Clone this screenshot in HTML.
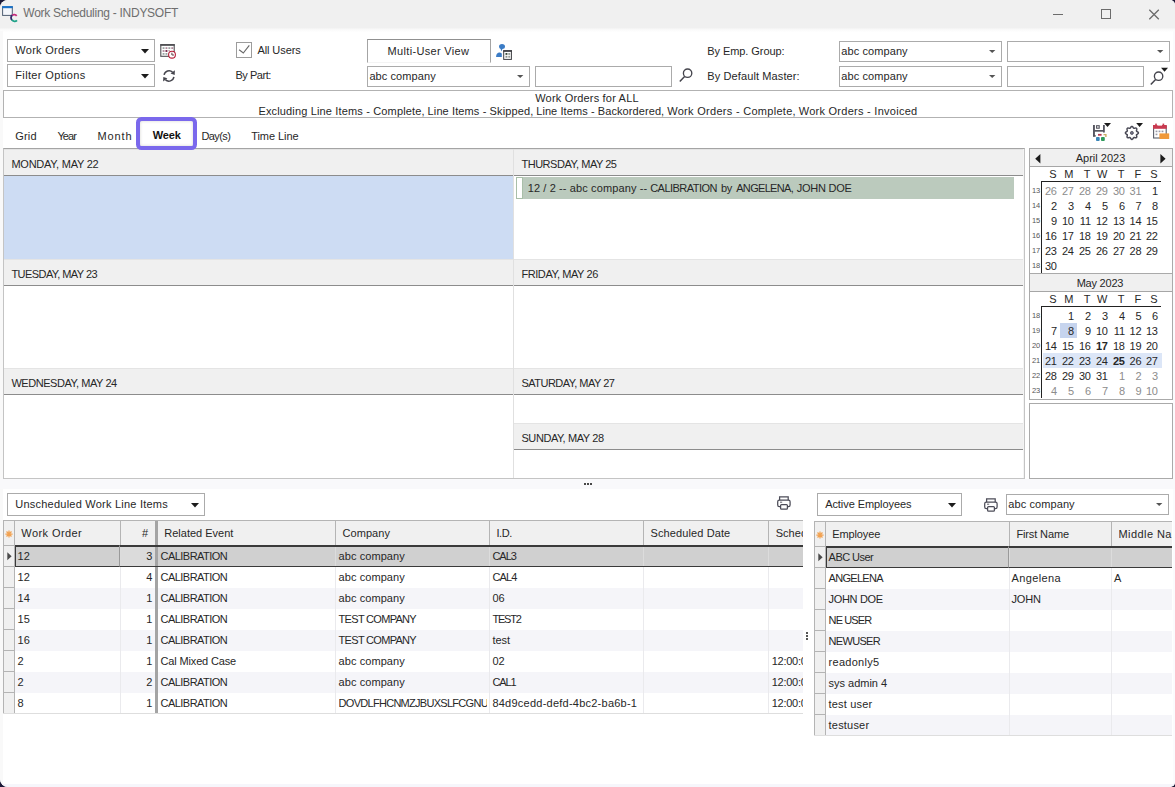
<!DOCTYPE html>
<html lang="en"><head><meta charset="utf-8"><title>Work Scheduling - INDYSOFT</title>
<style>
html,body{margin:0;padding:0;}
body{width:1175px;height:787px;overflow:hidden;background:#1d1a38;font-family:"Liberation Sans", sans-serif;font-size:11px;color:#272727;}
#win{position:absolute;left:0;top:0;width:1175px;height:787px;background:#fff;border-radius:8px 5px 5px 8px;overflow:hidden;}
.a{position:absolute;box-sizing:border-box;}
.t{position:absolute;white-space:nowrap;line-height:14px;height:14px;}
.c{overflow:hidden;}
svg{position:absolute;overflow:visible;}
</style></head><body><div id="win">
<div class="a" style="left:0px;top:0px;width:1175px;height:33px;background:linear-gradient(#f0f0f0 0,#f0f0f0 27.5px,#fbfbfb 30px,#ffffff 32.5px);"></div>
<svg style="left:0;top:0" width="20" height="24" viewBox="0 0 20 24">
<rect x="2.6" y="6.8" width="9.7" height="8.6" fill="#f3f6fb" stroke="#4f5f73" stroke-width="1"/>
<rect x="2.1" y="6.1" width="10.7" height="2.1" fill="#1a72c9"/>
<path d="M16.7 15.9 A3.2 3.2 0 0 0 12.2 15.4" fill="none" stroke="#c52c7c" stroke-width="1.8"/>
<path d="M12.2 15.2 A3.2 3.2 0 0 0 12 20" fill="none" stroke="#33296b" stroke-width="1.8"/>
<path d="M11.9 19.8 A3.2 3.2 0 0 0 17 20.3" fill="none" stroke="#1fa389" stroke-width="1.8"/>
</svg>
<svg style="left:1040px;top:0" width="135" height="30" viewBox="0 0 135 30" fill="none" stroke="#6c6c6c" stroke-width="1">
<path d="M13 14.5 H23"/><rect x="61.5" y="9.5" width="9" height="9"/><path d="M109.3 9.8 L118.8 19.2 M118.8 9.8 L109.3 19.2" stroke-width="1.3"/></svg>
<div class="a" style="left:0px;top:31px;width:3px;height:756px;background:#f9f9f9;"></div>
<div class="a" style="left:1173px;top:31px;width:2px;height:756px;background:#fbfbfd;"></div>
<div class="a" style="left:7px;top:39px;width:148px;height:23px;background:#fff;border:1px solid #ababab;"></div>
<svg style="left:140.5px;top:48.5px" width="8" height="5" viewBox="0 0 8 5"><path d="M0 0 H8 L4 4.6 Z" fill="#1c1c1c"/></svg>
<div class="a" style="left:7px;top:64px;width:148px;height:23px;background:#fff;border:1px solid #ababab;"></div>
<svg style="left:140.5px;top:73.5px" width="8" height="5" viewBox="0 0 8 5"><path d="M0 0 H8 L4 4.6 Z" fill="#1c1c1c"/></svg>
<svg style="left:159px;top:42px" width="19" height="19" viewBox="0 0 19 19">
<rect x="1.8" y="2.7" width="13.4" height="11.6" fill="#fff" stroke="#4e4e52" stroke-width="1.1"/>
<rect x="1.3" y="2.1" width="14.4" height="1.7" fill="#4e4e52"/>
<g fill="#9aa5a2"><rect x="3.6" y="5.2" width="1.9" height="1.8"/><rect x="9.4" y="5.2" width="1.9" height="1.8"/><rect x="3.6" y="11" width="1.9" height="1.8"/><rect x="6.5" y="11" width="1.9" height="1.8"/></g>
<g fill="#b18a9c"><rect x="6.5" y="5.2" width="1.9" height="1.8"/><rect x="12.3" y="5.2" width="1.9" height="1.8"/><rect x="3.6" y="8.1" width="1.9" height="1.8"/><rect x="9.4" y="8.1" width="1.4" height="1.2"/></g>
<rect x="6.5" y="8.1" width="1.9" height="1.8" fill="#6a1a3c"/>
<circle cx="13" cy="12.7" r="3.4" fill="#fff" stroke="#b51d38" stroke-width="1.1"/>
<path d="M12.9 10.7 V13 H15" fill="none" stroke="#4a2a30" stroke-width="0.9"/>
</svg>
<svg style="left:155px;top:62px" width="26" height="26" viewBox="155 62 26 26">
<path d="M164.1 74.9 A5 5 0 0 1 172.6 72.2" fill="none" stroke="#45454d" stroke-width="1.5"/>
<path d="M173.9 76.9 A5 5 0 0 1 165.4 79.6" fill="none" stroke="#45454d" stroke-width="1.5"/>
<path d="M174.9 70.2 L174.7 74.9 L170.6 73.6 Z" fill="#45454d"/>
<path d="M163.1 81.6 L163.3 76.9 L167.4 78.2 Z" fill="#45454d"/>
</svg>
<div class="a" style="left:236px;top:42px;width:16px;height:16px;background:#fff;border:1px solid #9c9c9c;"></div>
<svg style="left:236px;top:42px" width="16" height="16" viewBox="0 0 16 16"><path d="M3.1 7.7 L7.3 11 L13.3 3.4" fill="none" stroke="#6a6a6a" stroke-width="1.2"/></svg>
<div class="a" style="left:367px;top:39px;width:124px;height:24px;background:#fff;border:1px solid #a4a4a4;border-top-color:#909090;border-bottom:1px solid #f4f4f4;"></div>
<svg style="left:490px;top:38px" width="30" height="30" viewBox="490 38 30 30">
<ellipse cx="502" cy="46.4" rx="3" ry="2.5" fill="#3b7cc6"/>
<path d="M500.2 47.5 H503 L501.4 51.6 Z" fill="#3b7cc6"/>
<path d="M496.1 56.9 C496.1 53.6 498 52.6 499.6 52.6 C501 52.6 501.8 53.4 501.8 54.4 V56.9 Z" fill="#3b7cc6"/>
<rect x="503.7" y="50.8" width="7.7" height="8.6" fill="#fff" stroke="#3e3e42" stroke-width="1"/>
<rect x="503.2" y="50.2" width="8.8" height="1.6" fill="#3e3e42"/>
<rect x="505.5" y="53" width="1.9" height="1.9" fill="#3a4a3a"/><rect x="508.3" y="53" width="1.9" height="1.9" fill="#9aa09a"/>
<rect x="505.5" y="55.8" width="1.9" height="1.9" fill="#8a908a"/><rect x="508.3" y="55.8" width="1.9" height="1.9" fill="#9aa09a"/>
</svg>
<div class="a" style="left:367px;top:66px;width:163px;height:21px;background:#fff;border:1px solid #ababab;"></div>
<svg style="left:517.0px;top:75.0px" width="7" height="4" viewBox="0 0 7 4"><path d="M0 0 H6.4 L3.2 3 Z" fill="#555555"/></svg>
<div class="a" style="left:535px;top:66px;width:137px;height:21px;background:#fff;border:1px solid #ababab;"></div>
<svg style="left:679px;top:67.6px" width="18" height="16" viewBox="0 0 18 16"><circle cx="8.6" cy="5.2" r="4.2" fill="none" stroke="#44444c" stroke-width="1.35"/><path d="M5.6 8.4 L0.8 13.4" stroke="#44444c" stroke-width="1.5" fill="none"/></svg>
<div class="a" style="left:839px;top:41px;width:163px;height:21px;background:#fff;border:1px solid #ababab;"></div>
<svg style="left:989.0px;top:50.0px" width="7" height="4" viewBox="0 0 7 4"><path d="M0 0 H6.4 L3.2 3 Z" fill="#555555"/></svg>
<div class="a" style="left:1007px;top:41px;width:163px;height:21px;background:#fff;border:1px solid #ababab;"></div>
<svg style="left:1157.0px;top:50.0px" width="7" height="4" viewBox="0 0 7 4"><path d="M0 0 H6.4 L3.2 3 Z" fill="#555555"/></svg>
<div class="a" style="left:839px;top:66px;width:163px;height:21px;background:#fff;border:1px solid #ababab;"></div>
<svg style="left:989.0px;top:75.0px" width="7" height="4" viewBox="0 0 7 4"><path d="M0 0 H6.4 L3.2 3 Z" fill="#555555"/></svg>
<div class="a" style="left:1007px;top:66px;width:137px;height:21px;background:#fff;border:1px solid #ababab;"></div>
<svg style="left:1150px;top:71px" width="18" height="16" viewBox="0 0 18 16"><circle cx="8.6" cy="5.2" r="4.2" fill="none" stroke="#44444c" stroke-width="1.35"/><path d="M5.6 8.4 L0.8 13.4" stroke="#44444c" stroke-width="1.5" fill="none"/><path d="M11 -3.2 H18 L14.5 0.7 Z" fill="#1c1c1c"/></svg>
<div class="a" style="left:3px;top:90px;width:1170px;height:28px;background:#fff;border:1px solid #b2b2b2;"></div>
<svg style="left:1088px;top:118px" width="28" height="28" viewBox="1088 118 28 28">
<rect x="1093" y="125" width="1.9" height="11.6" fill="#55555f"/><rect x="1093" y="135.2" width="2.8" height="1.4" fill="#55555f"/>
<rect x="1103" y="125" width="1.8" height="7.5" fill="#55555f"/>
<rect x="1094" y="130" width="10" height="1.7" fill="#55555f"/>
<rect x="1096.6" y="125.7" width="2.6" height="2.5" fill="#fff" stroke="#55555f" stroke-width="1.1"/>
<rect x="1098" y="133.9" width="3.6" height="1.8" fill="#b8384f"/>
<path d="M1103.5 133.9 H1106.6 V136.9 H1105.2 V135.3 H1103.5 Z" fill="#c9ab62"/>
<rect x="1096" y="137.1" width="3.7" height="3.8" rx="0.9" fill="#3a86b8"/><rect x="1101" y="137.1" width="3.8" height="3.8" rx="0.9" fill="#2f9a5c"/>
<path d="M1104 123 H1111 L1107.5 127 Z" fill="#1c1c1c"/>
</svg>
<svg style="left:1120px;top:118px" width="28" height="28" viewBox="1120 118 28 28">
<path d="M1131.90 126.40 L1132.32 126.51 L1132.70 126.83 L1133.02 127.26 L1133.29 127.71 L1133.54 128.07 L1133.81 128.28 L1134.16 128.33 L1134.59 128.25 L1135.09 128.12 L1135.63 128.04 L1136.12 128.09 L1136.50 128.30 L1136.71 128.68 L1136.76 129.17 L1136.68 129.71 L1136.55 130.21 L1136.47 130.64 L1136.52 130.99 L1136.73 131.26 L1137.09 131.51 L1137.54 131.78 L1137.97 132.10 L1138.29 132.48 L1138.40 132.90 L1138.29 133.32 L1137.97 133.70 L1137.54 134.02 L1137.09 134.29 L1136.73 134.54 L1136.52 134.81 L1136.47 135.16 L1136.55 135.59 L1136.68 136.09 L1136.76 136.63 L1136.71 137.12 L1136.50 137.50 L1136.12 137.71 L1135.63 137.76 L1135.09 137.68 L1134.59 137.55 L1134.16 137.47 L1133.81 137.52 L1133.54 137.73 L1133.29 138.09 L1133.02 138.54 L1132.70 138.97 L1132.32 139.29 L1131.90 139.40 L1131.48 139.29 L1131.10 138.97 L1130.78 138.54 L1130.51 138.09 L1130.26 137.73 L1129.99 137.52 L1129.64 137.47 L1129.21 137.55 L1128.71 137.68 L1128.17 137.76 L1127.68 137.71 L1127.30 137.50 L1127.09 137.12 L1127.04 136.63 L1127.12 136.09 L1127.25 135.59 L1127.33 135.16 L1127.28 134.81 L1127.07 134.54 L1126.71 134.29 L1126.26 134.02 L1125.83 133.70 L1125.51 133.32 L1125.40 132.90 L1125.51 132.48 L1125.83 132.10 L1126.26 131.78 L1126.71 131.51 L1127.07 131.26 L1127.28 130.99 L1127.33 130.64 L1127.25 130.21 L1127.12 129.71 L1127.04 129.17 L1127.09 128.68 L1127.30 128.30 L1127.68 128.09 L1128.17 128.04 L1128.71 128.12 L1129.21 128.25 L1129.64 128.33 L1129.99 128.28 L1130.26 128.07 L1130.51 127.71 L1130.78 127.26 L1131.10 126.83 L1131.48 126.51 Z" fill="none" stroke="#4a4a56" stroke-width="1.5" stroke-linejoin="round"/>
<circle cx="1131.9" cy="132.9" r="1.5" fill="#74748a" stroke="#4a4a56" stroke-width="0.8"/>
<path d="M1136.2 123 H1143 L1139.6 127 Z" fill="#1c1c1c"/>
</svg>
<svg style="left:1152px;top:123px" width="18" height="18" viewBox="0 0 18 18">
<rect x="1.6" y="3.4" width="12.6" height="11.6" fill="#fff" stroke="#5a5f6a" stroke-width="1.1"/>
<rect x="1" y="2" width="13.8" height="3.8" fill="#c93a50"/>
<rect x="3.2" y="0.6" width="1.6" height="2.6" fill="#c93a50"/><rect x="10.6" y="0.6" width="1.6" height="2.6" fill="#c93a50"/>
<rect x="5.4" y="1.2" width="4.6" height="1.4" fill="#fff"/>
<g fill="#9a9aa6"><rect x="3.6" y="7.6" width="1.8" height="1.6"/><rect x="6.6" y="7.6" width="1.8" height="1.6"/><rect x="9.6" y="7.6" width="1.8" height="1.6"/><rect x="3.6" y="10.6" width="1.8" height="1.6"/></g>
<rect x="7.4" y="10.4" width="9.8" height="5.6" fill="#f0993a"/>
</svg>
<div class="a" style="left:3px;top:148px;width:1022px;height:331px;background:#fff;border:1px solid #c4c4c4;border-top-color:#a4a4a4;"></div>
<div class="a" style="left:4px;top:149px;width:509px;height:26px;background:#f0f0f0;border-top:1px solid #e4e4e4;"></div>
<div class="a" style="left:4px;top:175px;width:509px;height:1px;background:#8c8c8c;"></div>
<div class="a" style="left:4px;top:259px;width:509px;height:26px;background:#f0f0f0;border-top:1px solid #e4e4e4;"></div>
<div class="a" style="left:4px;top:285px;width:509px;height:1px;background:#8c8c8c;"></div>
<div class="a" style="left:4px;top:368px;width:509px;height:26px;background:#f0f0f0;border-top:1px solid #e4e4e4;"></div>
<div class="a" style="left:4px;top:394px;width:509px;height:1px;background:#8c8c8c;"></div>
<div class="a" style="left:514px;top:149px;width:509px;height:26px;background:#f0f0f0;border-top:1px solid #e4e4e4;"></div>
<div class="a" style="left:514px;top:175px;width:509px;height:1px;background:#8c8c8c;"></div>
<div class="a" style="left:514px;top:259px;width:509px;height:26px;background:#f0f0f0;border-top:1px solid #e4e4e4;"></div>
<div class="a" style="left:514px;top:285px;width:509px;height:1px;background:#8c8c8c;"></div>
<div class="a" style="left:514px;top:368px;width:509px;height:26px;background:#f0f0f0;border-top:1px solid #e4e4e4;"></div>
<div class="a" style="left:514px;top:394px;width:509px;height:1px;background:#8c8c8c;"></div>
<div class="a" style="left:514px;top:423px;width:509px;height:26px;background:#f0f0f0;border-top:1px solid #e4e4e4;"></div>
<div class="a" style="left:514px;top:449px;width:509px;height:1px;background:#8c8c8c;"></div>
<div class="a" style="left:4px;top:176px;width:509px;height:83px;background:#cddcf3;"></div>
<div class="a" style="left:513px;top:149px;width:1px;height:329px;background:#e0e0e0;"></div>
<div class="a" style="left:1023px;top:149px;width:1px;height:329px;background:#f4f4f4;"></div>
<div class="a" style="left:516px;top:177px;width:498px;height:22px;background:#bbcabd;"></div>
<div class="a" style="left:516px;top:177px;width:7px;height:22px;background:#fff;border:1px solid #a9bfa9;"></div>
<div class="a" style="left:1029px;top:148px;width:144px;height:252px;background:#fff;border:1px solid #aaaaaa;"></div>
<div class="a" style="left:1029px;top:403px;width:144px;height:76px;background:#fff;border:1px solid #aaaaaa;"></div>
<div class="a" style="left:1060px;top:323px;width:17px;height:15px;background:#c6d4ee;"></div>
<div class="a" style="left:1043px;top:353px;width:119px;height:15px;background:#dce6f7;"></div>
<div class="a" style="left:1030px;top:149px;width:142px;height:17px;background:#f0f0f0;"></div>
<div class="a" style="left:1030px;top:166px;width:142px;height:1px;background:#a6a6a6;"></div>
<svg style="left:1035px;top:153.6px" width="6" height="10" viewBox="0 0 6 10"><path d="M5.4 0 V9.4 L0.2 4.7 Z" fill="#1c1c1c"/></svg>
<svg style="left:1160px;top:153.6px" width="6" height="10" viewBox="0 0 6 10"><path d="M0.4 0 V9.4 L5.6 4.7 Z" fill="#1c1c1c"/></svg>
<div class="a" style="left:1041px;top:181px;width:120px;height:1px;background:#222;"></div>
<div class="a" style="left:1041px;top:181px;width:1px;height:92px;background:#222;"></div>
<div class="a" style="left:1030px;top:273px;width:142px;height:1px;background:#aaaaaa;"></div>
<div class="a" style="left:1030px;top:274px;width:142px;height:17px;background:#f0f0f0;"></div>
<div class="a" style="left:1030px;top:291px;width:142px;height:1px;background:#a6a6a6;"></div>
<div class="a" style="left:1041px;top:306px;width:120px;height:1px;background:#222;"></div>
<div class="a" style="left:1041px;top:306px;width:1px;height:92px;background:#222;"></div>
<div class="a" style="left:0px;top:479px;width:1175px;height:10px;background:#f9f9fb;"></div>
<div class="a" style="left:584px;top:483px;width:2px;height:2px;background:#484848;"></div>
<div class="a" style="left:587px;top:483px;width:2px;height:2px;background:#484848;"></div>
<div class="a" style="left:590px;top:483px;width:2px;height:2px;background:#484848;"></div>
<div class="a" style="left:806px;top:632px;width:2px;height:2px;background:#555;"></div>
<div class="a" style="left:806px;top:635px;width:2px;height:2px;background:#555;"></div>
<div class="a" style="left:806px;top:638px;width:2px;height:2px;background:#555;"></div>
<div class="a" style="left:7px;top:493px;width:198px;height:23px;background:#fff;border:1px solid #ababab;"></div>
<svg style="left:190.5px;top:502.5px" width="8" height="5" viewBox="0 0 8 5"><path d="M0 0 H8 L4 4.6 Z" fill="#1c1c1c"/></svg>
<div class="a" style="left:817px;top:493px;width:145px;height:23px;background:#fff;border:1px solid #ababab;"></div>
<svg style="left:947.5px;top:502.5px" width="8" height="5" viewBox="0 0 8 5"><path d="M0 0 H8 L4 4.6 Z" fill="#1c1c1c"/></svg>
<div class="a" style="left:1006px;top:494px;width:163px;height:21px;background:#fff;border:1px solid #ababab;"></div>
<svg style="left:1156.0px;top:503.0px" width="7" height="4" viewBox="0 0 7 4"><path d="M0 0 H6.4 L3.2 3 Z" fill="#555555"/></svg>
<svg style="left:777.1px;top:495.8px" width="15" height="15" viewBox="0 0 15 15" fill="none" stroke="#4c4c58" stroke-width="1.25">
<path d="M2.6 4.2 V0.8 H11.2 V4.2"/><rect x="0.7" y="4.1" width="12.4" height="6.4" rx="1.6"/><rect x="3.6" y="8.5" width="6.8" height="4.7" rx="0.9" fill="#fff"/><path d="M3 6.2 H5.2" stroke-width="0.9"/></svg>
<svg style="left:983.9px;top:498px" width="15" height="15" viewBox="0 0 15 15" fill="none" stroke="#4c4c58" stroke-width="1.25">
<path d="M2.6 4.2 V0.8 H11.2 V4.2"/><rect x="0.7" y="4.1" width="12.4" height="6.4" rx="1.6"/><rect x="3.6" y="8.5" width="6.8" height="4.7" rx="0.9" fill="#fff"/><path d="M3 6.2 H5.2" stroke-width="0.9"/></svg>
<div class="a" style="left:3px;top:520px;width:800px;height:26px;background:#f0f0f0;border-top:1px solid #b4b4b4;border-left:1px solid #b4b4b4;"></div>
<div class="a" style="left:15px;top:546px;width:788px;height:20px;background:#d0d0d0;"></div>
<div class="a" style="left:3px;top:545px;width:12px;height:22px;background:#f0f0f0;border:1px solid #b4b4b4;"></div>
<div class="a" style="left:15px;top:567px;width:788px;height:21px;background:#fff;"></div>
<div class="a" style="left:3px;top:566px;width:12px;height:22px;background:#f0f0f0;border:1px solid #b4b4b4;"></div>
<div class="a" style="left:15px;top:588px;width:788px;height:21px;background:#f5f5f9;"></div>
<div class="a" style="left:3px;top:587px;width:12px;height:22px;background:#f0f0f0;border:1px solid #b4b4b4;"></div>
<div class="a" style="left:15px;top:609px;width:788px;height:21px;background:#fff;"></div>
<div class="a" style="left:3px;top:608px;width:12px;height:22px;background:#f0f0f0;border:1px solid #b4b4b4;"></div>
<div class="a" style="left:15px;top:630px;width:788px;height:21px;background:#f5f5f9;"></div>
<div class="a" style="left:3px;top:629px;width:12px;height:22px;background:#f0f0f0;border:1px solid #b4b4b4;"></div>
<div class="a" style="left:15px;top:651px;width:788px;height:21px;background:#fff;"></div>
<div class="a" style="left:3px;top:650px;width:12px;height:22px;background:#f0f0f0;border:1px solid #b4b4b4;"></div>
<div class="a" style="left:15px;top:672px;width:788px;height:21px;background:#f5f5f9;"></div>
<div class="a" style="left:3px;top:671px;width:12px;height:22px;background:#f0f0f0;border:1px solid #b4b4b4;"></div>
<div class="a" style="left:15px;top:693px;width:788px;height:21px;background:#fff;"></div>
<div class="a" style="left:3px;top:692px;width:12px;height:22px;background:#f0f0f0;border:1px solid #b4b4b4;"></div>
<div class="a" style="left:120px;top:521px;width:1px;height:24px;background:#b4b4b4;"></div>
<div class="a" style="left:120px;top:567px;width:1px;height:147px;background:#eaeaed;"></div>
<div class="a" style="left:120px;top:546px;width:1px;height:20px;background:#dcdcdc;"></div>
<div class="a" style="left:155px;top:521px;width:1px;height:24px;background:#b4b4b4;"></div>
<div class="a" style="left:155px;top:567px;width:1px;height:147px;background:#eaeaed;"></div>
<div class="a" style="left:155px;top:546px;width:1px;height:20px;background:#dcdcdc;"></div>
<div class="a" style="left:335px;top:521px;width:1px;height:24px;background:#b4b4b4;"></div>
<div class="a" style="left:335px;top:567px;width:1px;height:147px;background:#eaeaed;"></div>
<div class="a" style="left:335px;top:546px;width:1px;height:20px;background:#dcdcdc;"></div>
<div class="a" style="left:489px;top:521px;width:1px;height:24px;background:#b4b4b4;"></div>
<div class="a" style="left:489px;top:567px;width:1px;height:147px;background:#eaeaed;"></div>
<div class="a" style="left:489px;top:546px;width:1px;height:20px;background:#dcdcdc;"></div>
<div class="a" style="left:643px;top:521px;width:1px;height:24px;background:#b4b4b4;"></div>
<div class="a" style="left:643px;top:567px;width:1px;height:147px;background:#eaeaed;"></div>
<div class="a" style="left:643px;top:546px;width:1px;height:20px;background:#dcdcdc;"></div>
<div class="a" style="left:768px;top:521px;width:1px;height:24px;background:#b4b4b4;"></div>
<div class="a" style="left:768px;top:567px;width:1px;height:147px;background:#eaeaed;"></div>
<div class="a" style="left:768px;top:546px;width:1px;height:20px;background:#dcdcdc;"></div>
<div class="a" style="left:14px;top:521px;width:1px;height:24px;background:#b4b4b4;"></div>
<div class="a" style="left:155px;top:521px;width:3px;height:193px;background:#a4a4a4;"></div>
<div class="a" style="left:15px;top:545px;width:788px;height:1.5px;background:#3a3a3a;"></div>
<div class="a" style="left:15px;top:565.5px;width:788px;height:1.5px;background:#3a3a3a;"></div>
<div class="a" style="left:15px;top:545px;width:105px;height:22px;border:1.5px solid #3a3a3a;border-right:1px solid #9a9a9a;"></div>
<div class="a" style="left:3px;top:713px;width:800px;height:1px;background:#dedede;"></div>
<svg style="left:6.5px;top:551.5px" width="5" height="9" viewBox="0 0 5 9"><path d="M0.3 0.3 V8.3 L4.6 4.3 Z" fill="#4a4a4a"/></svg>
<svg style="left:4.800000000000001px;top:529.6px" width="8" height="8" viewBox="-4 -4 8 8" stroke="#f2a251" stroke-width="1.25"><path d="M0 -3.6 V3.6 M-3.6 0 H3.6 M-2.5 -2.5 L2.5 2.5 M-2.5 2.5 L2.5 -2.5"/></svg>
<div class="a" style="left:121px;top:546.5px;width:34px;height:19px;background:#dbdbdb;"></div>
<div class="a" style="left:814px;top:521px;width:358px;height:26px;background:#f0f0f0;border-top:1px solid #b4b4b4;border-left:1px solid #b4b4b4;"></div>
<div class="a" style="left:826px;top:547px;width:346px;height:20px;background:#d0d0d0;"></div>
<div class="a" style="left:814px;top:546px;width:12px;height:22px;background:#f0f0f0;border:1px solid #b4b4b4;"></div>
<div class="a" style="left:826px;top:568px;width:346px;height:21px;background:#fff;"></div>
<div class="a" style="left:814px;top:567px;width:12px;height:22px;background:#f0f0f0;border:1px solid #b4b4b4;"></div>
<div class="a" style="left:826px;top:589px;width:346px;height:21px;background:#f5f5f9;"></div>
<div class="a" style="left:814px;top:588px;width:12px;height:22px;background:#f0f0f0;border:1px solid #b4b4b4;"></div>
<div class="a" style="left:826px;top:610px;width:346px;height:21px;background:#fff;"></div>
<div class="a" style="left:814px;top:609px;width:12px;height:22px;background:#f0f0f0;border:1px solid #b4b4b4;"></div>
<div class="a" style="left:826px;top:631px;width:346px;height:21px;background:#f5f5f9;"></div>
<div class="a" style="left:814px;top:630px;width:12px;height:22px;background:#f0f0f0;border:1px solid #b4b4b4;"></div>
<div class="a" style="left:826px;top:652px;width:346px;height:21px;background:#fff;"></div>
<div class="a" style="left:814px;top:651px;width:12px;height:22px;background:#f0f0f0;border:1px solid #b4b4b4;"></div>
<div class="a" style="left:826px;top:673px;width:346px;height:21px;background:#f5f5f9;"></div>
<div class="a" style="left:814px;top:672px;width:12px;height:22px;background:#f0f0f0;border:1px solid #b4b4b4;"></div>
<div class="a" style="left:826px;top:694px;width:346px;height:21px;background:#fff;"></div>
<div class="a" style="left:814px;top:693px;width:12px;height:22px;background:#f0f0f0;border:1px solid #b4b4b4;"></div>
<div class="a" style="left:826px;top:715px;width:346px;height:21px;background:#f5f5f9;"></div>
<div class="a" style="left:814px;top:714px;width:12px;height:22px;background:#f0f0f0;border:1px solid #b4b4b4;"></div>
<div class="a" style="left:1009px;top:522px;width:1px;height:24px;background:#b4b4b4;"></div>
<div class="a" style="left:1009px;top:568px;width:1px;height:168px;background:#eaeaed;"></div>
<div class="a" style="left:1009px;top:547px;width:1px;height:20px;background:#dcdcdc;"></div>
<div class="a" style="left:1111px;top:522px;width:1px;height:24px;background:#b4b4b4;"></div>
<div class="a" style="left:1111px;top:568px;width:1px;height:168px;background:#eaeaed;"></div>
<div class="a" style="left:1111px;top:547px;width:1px;height:20px;background:#dcdcdc;"></div>
<div class="a" style="left:825px;top:522px;width:1px;height:24px;background:#b4b4b4;"></div>
<div class="a" style="left:826px;top:546px;width:346px;height:1.5px;background:#3a3a3a;"></div>
<div class="a" style="left:826px;top:566.5px;width:346px;height:1.5px;background:#3a3a3a;"></div>
<div class="a" style="left:826px;top:546px;width:183px;height:22px;border:1.5px solid #3a3a3a;border-right:1px solid #9a9a9a;"></div>
<div class="a" style="left:814px;top:735px;width:358px;height:1px;background:#dedede;"></div>
<svg style="left:817.5px;top:552.5px" width="5" height="9" viewBox="0 0 5 9"><path d="M0.3 0.3 V8.3 L4.6 4.3 Z" fill="#4a4a4a"/></svg>
<svg style="left:815.8px;top:530.6px" width="8" height="8" viewBox="-4 -4 8 8" stroke="#f2a251" stroke-width="1.25"><path d="M0 -3.6 V3.6 M-3.6 0 H3.6 M-2.5 -2.5 L2.5 2.5 M-2.5 2.5 L2.5 -2.5"/></svg>
<div class="a" style="left:0px;top:784px;width:1175px;height:3px;background:#f6f6fb;"></div>
<span class="t" style="top:5.84px;font-size:12px;color:#6e6e6e;letter-spacing:-0.273px;left:23.30px;">Work Scheduling - INDYSOFT</span>
<span class="t" style="top:43.19px;letter-spacing:0.286px;left:15.30px;">Work Orders</span>
<span class="t" style="top:68.19px;letter-spacing:0.352px;left:15.30px;">Filter Options</span>
<span class="t" style="top:42.69px;letter-spacing:-0.077px;left:257.40px;">All Users</span>
<span class="t" style="top:68.49px;letter-spacing:-0.446px;left:235.40px;">By Part:</span>
<span class="t" style="top:43.89px;letter-spacing:0.328px;left:387.60px;">Multi-User View</span>
<span class="t" style="top:68.59px;letter-spacing:0.086px;left:369.40px;">abc company</span>
<span class="t" style="top:43.89px;letter-spacing:-0.074px;left:707.30px;">By Emp. Group:</span>
<span class="t" style="top:68.59px;letter-spacing:0.107px;left:707.30px;">By Default Master:</span>
<span class="t" style="top:43.89px;letter-spacing:0.086px;left:841.30px;">abc company</span>
<span class="t" style="top:68.59px;letter-spacing:0.086px;left:841.30px;">abc company</span>
<span class="t" style="top:90.99px;letter-spacing:0.180px;left:87.00px;width:1000px;text-align:center;">Work Orders for ALL</span>
<span class="t" style="top:103.99px;letter-spacing:0.154px;left:258.40px;">Excluding Line Items - Complete,</span>
<span class="t" style="top:103.99px;letter-spacing:0.113px;left:427.60px;">Line Items - Skipped,</span>
<span class="t" style="top:103.99px;letter-spacing:0.085px;left:536.20px;">Line Items - Backordered,</span>
<span class="t" style="top:103.99px;letter-spacing:0.293px;left:667.20px;">Work Orders - Complete,</span>
<span class="t" style="top:103.99px;letter-spacing:0.267px;left:798.70px;">Work Orders - Invoiced</span>
<span class="t" style="top:128.99px;letter-spacing:0.173px;left:15.30px;">Grid</span>
<span class="t" style="top:128.99px;letter-spacing:-0.878px;left:57.40px;">Year</span>
<span class="t" style="top:128.99px;letter-spacing:0.880px;left:97.50px;">Month</span>
<span class="t" style="top:128.39px;color:#111;font-weight:bold;letter-spacing:-0.149px;left:152.70px;">Week</span>
<span class="t" style="top:128.99px;letter-spacing:-0.618px;left:201.50px;">Day(s)</span>
<span class="t" style="top:128.99px;letter-spacing:-0.061px;left:251.20px;">Time Line</span>
<span class="t" style="top:156.99px;letter-spacing:-0.229px;left:11.40px;">MONDAY, MAY 22</span>
<span class="t" style="top:266.99px;letter-spacing:-0.554px;left:11.40px;">TUESDAY, MAY 23</span>
<span class="t" style="top:375.99px;letter-spacing:-0.443px;left:11.40px;">WEDNESDAY, MAY 24</span>
<span class="t" style="top:156.99px;letter-spacing:-0.460px;left:521.40px;">THURSDAY, MAY 25</span>
<span class="t" style="top:266.99px;letter-spacing:-0.418px;left:521.40px;">FRIDAY, MAY 26</span>
<span class="t" style="top:375.99px;letter-spacing:-0.499px;left:521.40px;">SATURDAY, MAY 27</span>
<span class="t" style="top:430.99px;letter-spacing:-0.396px;left:521.40px;">SUNDAY, MAY 28</span>
<span class="t" style="top:181.19px;letter-spacing:0.118px;left:527.70px;">12 / 2 -- abc company --</span>
<span class="t" style="top:181.19px;letter-spacing:-0.533px;left:650.20px;">CALIBRATION</span>
<span class="t" style="top:181.19px;letter-spacing:-0.325px;left:721.00px;">by</span>
<span class="t" style="top:181.19px;letter-spacing:-0.671px;left:736.20px;">ANGELENA,</span>
<span class="t" style="top:181.19px;letter-spacing:-0.263px;left:796.80px;">JOHN DOE</span>
<span class="t" style="top:150.99px;letter-spacing:0.017px;left:1075.70px;">April 2023</span>
<span class="t" style="top:166.69px;right:118.50px;">S</span>
<span class="t" style="top:166.69px;right:101.50px;">M</span>
<span class="t" style="top:166.69px;right:84.50px;">T</span>
<span class="t" style="top:166.69px;right:67.50px;">W</span>
<span class="t" style="top:166.69px;right:50.50px;">T</span>
<span class="t" style="top:166.69px;right:33.90px;">F</span>
<span class="t" style="top:166.69px;right:17.50px;">S</span>
<span class="t" style="top:183.90px;font-size:7.5px;color:#555;letter-spacing:-0.150px;right:134.95px;">13</span>
<span class="t" style="top:183.99px;color:#8c8c8c;letter-spacing:-0.250px;right:118.25px;">26</span>
<span class="t" style="top:183.99px;color:#8c8c8c;letter-spacing:-0.250px;right:101.25px;">27</span>
<span class="t" style="top:183.99px;color:#8c8c8c;letter-spacing:-0.250px;right:84.25px;">28</span>
<span class="t" style="top:183.99px;color:#8c8c8c;letter-spacing:-0.250px;right:67.25px;">29</span>
<span class="t" style="top:183.99px;color:#8c8c8c;letter-spacing:-0.250px;right:50.25px;">30</span>
<span class="t" style="top:183.99px;color:#8c8c8c;letter-spacing:-0.250px;right:33.65px;">31</span>
<span class="t" style="top:183.99px;letter-spacing:-0.250px;right:17.25px;">1</span>
<span class="t" style="top:198.90px;font-size:7.5px;color:#555;letter-spacing:-0.150px;right:134.95px;">14</span>
<span class="t" style="top:198.99px;letter-spacing:-0.250px;right:118.25px;">2</span>
<span class="t" style="top:198.99px;letter-spacing:-0.250px;right:101.25px;">3</span>
<span class="t" style="top:198.99px;letter-spacing:-0.250px;right:84.25px;">4</span>
<span class="t" style="top:198.99px;letter-spacing:-0.250px;right:67.25px;">5</span>
<span class="t" style="top:198.99px;letter-spacing:-0.250px;right:50.25px;">6</span>
<span class="t" style="top:198.99px;letter-spacing:-0.250px;right:33.65px;">7</span>
<span class="t" style="top:198.99px;letter-spacing:-0.250px;right:17.25px;">8</span>
<span class="t" style="top:213.90px;font-size:7.5px;color:#555;letter-spacing:-0.150px;right:134.95px;">15</span>
<span class="t" style="top:213.99px;letter-spacing:-0.250px;right:118.25px;">9</span>
<span class="t" style="top:213.99px;letter-spacing:-0.250px;right:101.25px;">10</span>
<span class="t" style="top:213.99px;letter-spacing:-0.250px;right:84.25px;">11</span>
<span class="t" style="top:213.99px;letter-spacing:-0.250px;right:67.25px;">12</span>
<span class="t" style="top:213.99px;letter-spacing:-0.250px;right:50.25px;">13</span>
<span class="t" style="top:213.99px;letter-spacing:-0.250px;right:33.65px;">14</span>
<span class="t" style="top:213.99px;letter-spacing:-0.250px;right:17.25px;">15</span>
<span class="t" style="top:228.90px;font-size:7.5px;color:#555;letter-spacing:-0.150px;right:134.95px;">16</span>
<span class="t" style="top:228.99px;letter-spacing:-0.250px;right:118.25px;">16</span>
<span class="t" style="top:228.99px;letter-spacing:-0.250px;right:101.25px;">17</span>
<span class="t" style="top:228.99px;letter-spacing:-0.250px;right:84.25px;">18</span>
<span class="t" style="top:228.99px;letter-spacing:-0.250px;right:67.25px;">19</span>
<span class="t" style="top:228.99px;letter-spacing:-0.250px;right:50.25px;">20</span>
<span class="t" style="top:228.99px;letter-spacing:-0.250px;right:33.65px;">21</span>
<span class="t" style="top:228.99px;letter-spacing:-0.250px;right:17.25px;">22</span>
<span class="t" style="top:243.90px;font-size:7.5px;color:#555;letter-spacing:-0.150px;right:134.95px;">17</span>
<span class="t" style="top:243.99px;letter-spacing:-0.250px;right:118.25px;">23</span>
<span class="t" style="top:243.99px;letter-spacing:-0.250px;right:101.25px;">24</span>
<span class="t" style="top:243.99px;letter-spacing:-0.250px;right:84.25px;">25</span>
<span class="t" style="top:243.99px;letter-spacing:-0.250px;right:67.25px;">26</span>
<span class="t" style="top:243.99px;letter-spacing:-0.250px;right:50.25px;">27</span>
<span class="t" style="top:243.99px;letter-spacing:-0.250px;right:33.65px;">28</span>
<span class="t" style="top:243.99px;letter-spacing:-0.250px;right:17.25px;">29</span>
<span class="t" style="top:258.90px;font-size:7.5px;color:#555;letter-spacing:-0.150px;right:134.95px;">18</span>
<span class="t" style="top:258.99px;letter-spacing:-0.250px;right:118.25px;">30</span>
<span class="t" style="top:275.99px;letter-spacing:-0.230px;left:1076.70px;">May 2023</span>
<span class="t" style="top:291.69px;right:118.50px;">S</span>
<span class="t" style="top:291.69px;right:101.50px;">M</span>
<span class="t" style="top:291.69px;right:84.50px;">T</span>
<span class="t" style="top:291.69px;right:67.50px;">W</span>
<span class="t" style="top:291.69px;right:50.50px;">T</span>
<span class="t" style="top:291.69px;right:33.90px;">F</span>
<span class="t" style="top:291.69px;right:17.50px;">S</span>
<span class="t" style="top:308.90px;font-size:7.5px;color:#555;letter-spacing:-0.150px;right:134.95px;">18</span>
<span class="t" style="top:308.99px;letter-spacing:-0.250px;right:101.25px;">1</span>
<span class="t" style="top:308.99px;letter-spacing:-0.250px;right:84.25px;">2</span>
<span class="t" style="top:308.99px;letter-spacing:-0.250px;right:67.25px;">3</span>
<span class="t" style="top:308.99px;letter-spacing:-0.250px;right:50.25px;">4</span>
<span class="t" style="top:308.99px;letter-spacing:-0.250px;right:33.65px;">5</span>
<span class="t" style="top:308.99px;letter-spacing:-0.250px;right:17.25px;">6</span>
<span class="t" style="top:323.90px;font-size:7.5px;color:#555;letter-spacing:-0.150px;right:134.95px;">19</span>
<span class="t" style="top:323.99px;letter-spacing:-0.250px;right:118.25px;">7</span>
<span class="t" style="top:323.99px;letter-spacing:-0.250px;right:101.25px;">8</span>
<span class="t" style="top:323.99px;letter-spacing:-0.250px;right:84.25px;">9</span>
<span class="t" style="top:323.99px;letter-spacing:-0.250px;right:67.25px;">10</span>
<span class="t" style="top:323.99px;letter-spacing:-0.250px;right:50.25px;">11</span>
<span class="t" style="top:323.99px;letter-spacing:-0.250px;right:33.65px;">12</span>
<span class="t" style="top:323.99px;letter-spacing:-0.250px;right:17.25px;">13</span>
<span class="t" style="top:338.90px;font-size:7.5px;color:#555;letter-spacing:-0.150px;right:134.95px;">20</span>
<span class="t" style="top:338.99px;letter-spacing:-0.250px;right:118.25px;">14</span>
<span class="t" style="top:338.99px;letter-spacing:-0.250px;right:101.25px;">15</span>
<span class="t" style="top:338.99px;letter-spacing:-0.250px;right:84.25px;">16</span>
<span class="t" style="top:338.99px;font-weight:bold;letter-spacing:-0.250px;right:67.25px;">17</span>
<span class="t" style="top:338.99px;letter-spacing:-0.250px;right:50.25px;">18</span>
<span class="t" style="top:338.99px;letter-spacing:-0.250px;right:33.65px;">19</span>
<span class="t" style="top:338.99px;letter-spacing:-0.250px;right:17.25px;">20</span>
<span class="t" style="top:353.90px;font-size:7.5px;color:#555;letter-spacing:-0.150px;right:134.95px;">21</span>
<span class="t" style="top:353.99px;letter-spacing:-0.250px;right:118.25px;">21</span>
<span class="t" style="top:353.99px;letter-spacing:-0.250px;right:101.25px;">22</span>
<span class="t" style="top:353.99px;letter-spacing:-0.250px;right:84.25px;">23</span>
<span class="t" style="top:353.99px;letter-spacing:-0.250px;right:67.25px;">24</span>
<span class="t" style="top:353.99px;font-weight:bold;letter-spacing:-0.250px;right:50.25px;">25</span>
<span class="t" style="top:353.99px;letter-spacing:-0.250px;right:33.65px;">26</span>
<span class="t" style="top:353.99px;letter-spacing:-0.250px;right:17.25px;">27</span>
<span class="t" style="top:368.90px;font-size:7.5px;color:#555;letter-spacing:-0.150px;right:134.95px;">22</span>
<span class="t" style="top:368.99px;letter-spacing:-0.250px;right:118.25px;">28</span>
<span class="t" style="top:368.99px;letter-spacing:-0.250px;right:101.25px;">29</span>
<span class="t" style="top:368.99px;letter-spacing:-0.250px;right:84.25px;">30</span>
<span class="t" style="top:368.99px;letter-spacing:-0.250px;right:67.25px;">31</span>
<span class="t" style="top:368.99px;color:#8c8c8c;letter-spacing:-0.250px;right:50.25px;">1</span>
<span class="t" style="top:368.99px;color:#8c8c8c;letter-spacing:-0.250px;right:33.65px;">2</span>
<span class="t" style="top:368.99px;color:#8c8c8c;letter-spacing:-0.250px;right:17.25px;">3</span>
<span class="t" style="top:383.90px;font-size:7.5px;color:#555;letter-spacing:-0.150px;right:134.95px;">23</span>
<span class="t" style="top:383.99px;color:#8c8c8c;letter-spacing:-0.250px;right:118.25px;">4</span>
<span class="t" style="top:383.99px;color:#8c8c8c;letter-spacing:-0.250px;right:101.25px;">5</span>
<span class="t" style="top:383.99px;color:#8c8c8c;letter-spacing:-0.250px;right:84.25px;">6</span>
<span class="t" style="top:383.99px;color:#8c8c8c;letter-spacing:-0.250px;right:67.25px;">7</span>
<span class="t" style="top:383.99px;color:#8c8c8c;letter-spacing:-0.250px;right:50.25px;">8</span>
<span class="t" style="top:383.99px;color:#8c8c8c;letter-spacing:-0.250px;right:33.65px;">9</span>
<span class="t" style="top:383.99px;color:#8c8c8c;letter-spacing:-0.250px;right:17.25px;">10</span>
<span class="t" style="top:496.69px;letter-spacing:0.225px;left:15.30px;">Unscheduled Work Line Items</span>
<span class="t" style="top:496.69px;letter-spacing:-0.076px;left:825.20px;">Active Employees</span>
<span class="t" style="top:496.99px;letter-spacing:0.086px;left:1008.30px;">abc company</span>
<span class="t" style="top:525.99px;letter-spacing:0.418px;left:21.30px;">Work Order</span>
<span class="t" style="top:525.99px;left:142.00px;">#</span>
<span class="t" style="top:525.99px;letter-spacing:-0.001px;left:164.30px;">Related Event</span>
<span class="t" style="top:525.99px;letter-spacing:0.054px;left:342.50px;">Company</span>
<span class="t" style="top:525.99px;letter-spacing:-0.442px;left:496.50px;">I.D.</span>
<span class="t" style="top:525.99px;letter-spacing:0.109px;left:650.50px;">Scheduled Date</span>
<span class="t c" style="top:525.99px;letter-spacing:0.047px;left:775.70px;width:27.30px;">Scheduled Time</span>
<span class="t" style="top:548.79px;letter-spacing:0.100px;left:17.50px;">12</span>
<span class="t" style="top:548.79px;right:1022.70px;">3</span>
<span class="t" style="top:548.79px;letter-spacing:-0.533px;left:160.50px;">CALIBRATION</span>
<span class="t" style="top:548.79px;letter-spacing:0.066px;left:338.60px;">abc company</span>
<span class="t" style="top:548.79px;letter-spacing:-0.977px;left:492.40px;">CAL3</span>
<span class="t" style="top:569.79px;letter-spacing:0.100px;left:17.50px;">12</span>
<span class="t" style="top:569.79px;right:1022.70px;">4</span>
<span class="t" style="top:569.79px;letter-spacing:-0.533px;left:160.50px;">CALIBRATION</span>
<span class="t" style="top:569.79px;letter-spacing:0.066px;left:338.60px;">abc company</span>
<span class="t" style="top:569.79px;letter-spacing:-0.877px;left:492.40px;">CAL4</span>
<span class="t" style="top:590.79px;letter-spacing:0.100px;left:17.50px;">14</span>
<span class="t" style="top:590.79px;right:1022.70px;">1</span>
<span class="t" style="top:590.79px;letter-spacing:-0.533px;left:160.50px;">CALIBRATION</span>
<span class="t" style="top:590.79px;letter-spacing:0.066px;left:338.60px;">abc company</span>
<span class="t" style="top:590.79px;left:492.40px;">06</span>
<span class="t" style="top:611.79px;letter-spacing:0.100px;left:17.50px;">15</span>
<span class="t" style="top:611.79px;right:1022.70px;">1</span>
<span class="t" style="top:611.79px;letter-spacing:-0.533px;left:160.50px;">CALIBRATION</span>
<span class="t" style="top:611.79px;letter-spacing:-0.698px;left:338.60px;">TEST COMPANY</span>
<span class="t" style="top:611.79px;letter-spacing:-1.184px;left:492.40px;">TEST2</span>
<span class="t" style="top:632.79px;letter-spacing:0.100px;left:17.50px;">16</span>
<span class="t" style="top:632.79px;right:1022.70px;">1</span>
<span class="t" style="top:632.79px;letter-spacing:-0.533px;left:160.50px;">CALIBRATION</span>
<span class="t" style="top:632.79px;letter-spacing:-0.698px;left:338.60px;">TEST COMPANY</span>
<span class="t" style="top:632.79px;left:492.40px;">test</span>
<span class="t" style="top:653.79px;letter-spacing:0.100px;left:17.50px;">2</span>
<span class="t" style="top:653.79px;right:1022.70px;">1</span>
<span class="t" style="top:653.79px;letter-spacing:-0.149px;left:160.50px;">Cal Mixed Case</span>
<span class="t" style="top:653.79px;letter-spacing:0.066px;left:338.60px;">abc company</span>
<span class="t" style="top:653.79px;left:492.40px;">02</span>
<span class="t c" style="top:653.79px;letter-spacing:-0.250px;left:771.70px;width:31.20px;">12:00:00 AM</span>
<span class="t" style="top:674.79px;letter-spacing:0.100px;left:17.50px;">2</span>
<span class="t" style="top:674.79px;right:1022.70px;">2</span>
<span class="t" style="top:674.79px;letter-spacing:-0.533px;left:160.50px;">CALIBRATION</span>
<span class="t" style="top:674.79px;letter-spacing:0.066px;left:338.60px;">abc company</span>
<span class="t" style="top:674.79px;letter-spacing:-1.110px;left:492.40px;">CAL1</span>
<span class="t c" style="top:674.79px;letter-spacing:-0.250px;left:771.70px;width:31.20px;">12:00:00 AM</span>
<span class="t" style="top:695.79px;letter-spacing:0.100px;left:17.50px;">8</span>
<span class="t" style="top:695.79px;right:1022.70px;">1</span>
<span class="t" style="top:695.79px;letter-spacing:-0.533px;left:160.50px;">CALIBRATION</span>
<span class="t c" style="top:695.79px;letter-spacing:-0.715px;left:338.60px;width:148.20px;">DOVDLFHCNMZJBUXSLFCGNU</span>
<span class="t" style="top:695.79px;letter-spacing:0.240px;left:492.40px;">84d9cedd-defd-4bc2-ba6b-1</span>
<span class="t c" style="top:695.79px;letter-spacing:-0.250px;left:771.70px;width:31.20px;">12:00:00 AM</span>
<span class="t" style="top:526.99px;letter-spacing:-0.132px;left:832.30px;">Employee</span>
<span class="t" style="top:526.99px;letter-spacing:-0.120px;left:1016.40px;">First Name</span>
<span class="t c" style="top:526.99px;letter-spacing:0.419px;left:1118.50px;width:53.30px;">Middle Name</span>
<span class="t" style="top:549.79px;letter-spacing:-0.544px;left:828.60px;">ABC User</span>
<span class="t" style="top:570.79px;letter-spacing:-0.717px;left:828.60px;">ANGELENA</span>
<span class="t" style="top:570.79px;letter-spacing:0.371px;left:1011.50px;">Angelena</span>
<span class="t" style="top:570.79px;left:1114.00px;">A</span>
<span class="t" style="top:591.79px;letter-spacing:-0.335px;left:828.60px;">JOHN DOE</span>
<span class="t" style="top:591.79px;letter-spacing:-0.151px;left:1011.50px;">JOHN</span>
<span class="t" style="top:612.79px;letter-spacing:-0.901px;left:828.60px;">NE USER</span>
<span class="t" style="top:633.79px;letter-spacing:-0.706px;left:828.60px;">NEWUSER</span>
<span class="t" style="top:654.79px;letter-spacing:0.271px;left:828.60px;">readonly5</span>
<span class="t" style="top:675.79px;letter-spacing:-0.020px;left:828.60px;">sys admin 4</span>
<span class="t" style="top:696.79px;letter-spacing:0.164px;left:828.60px;">test user</span>
<span class="t" style="top:717.79px;letter-spacing:0.194px;left:828.60px;">testuser</span>
<div class="a" style="left:136px;top:117px;width:61px;height:33px;border:4px solid #7a68ec;border-radius:5.5px;box-shadow:inset 0 0 3px rgba(80,80,60,.25);"></div>
</div></body></html>
